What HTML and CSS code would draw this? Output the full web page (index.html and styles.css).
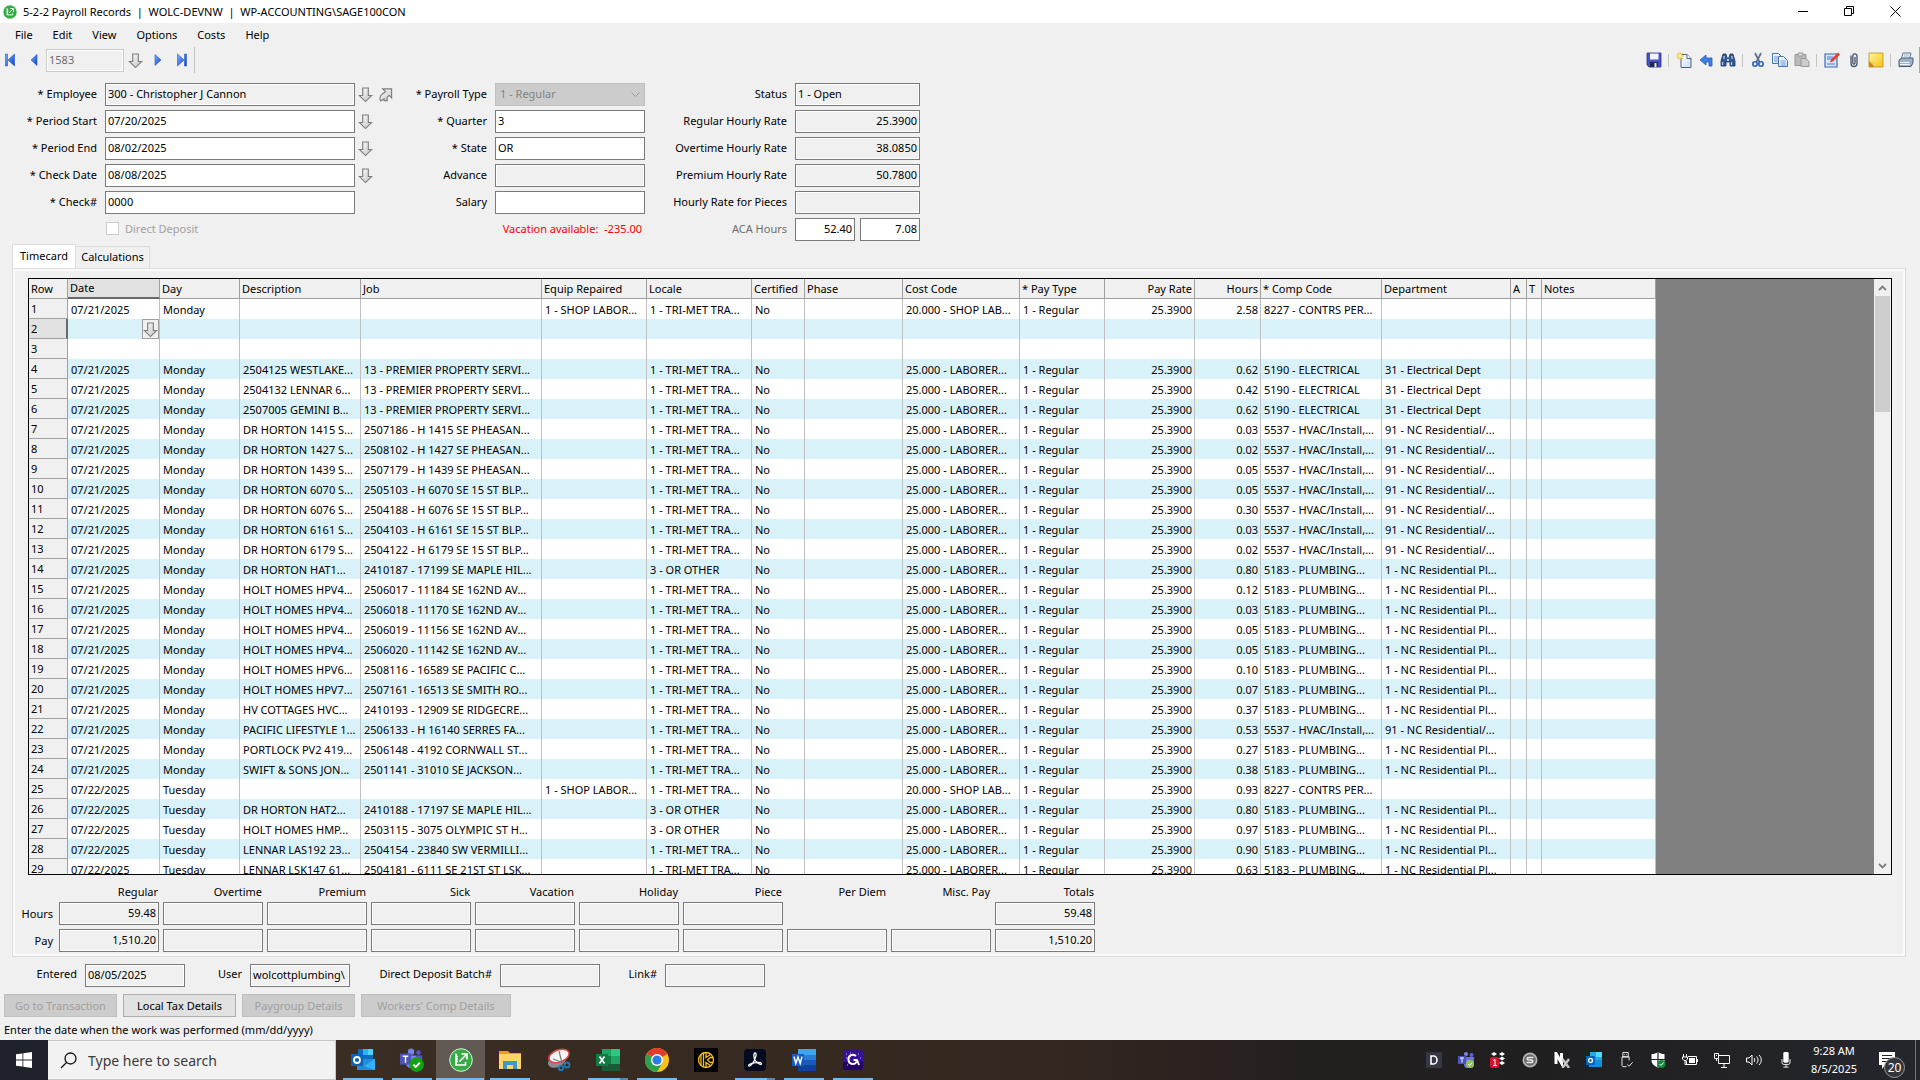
FILE: index.html
```html
<!DOCTYPE html>
<html lang="en">
<head>
<meta charset="utf-8">
<title>5-2-2 Payroll Records</title>
<link rel="stylesheet" href="styles.css">
</head>
<body>
<svg class="defs" aria-hidden="true">
  <defs>
    <linearGradient id="silver" x1="0" y1="0" x2="1" y2="1"><stop offset="0" stop-color="#fdfdfd"/><stop offset="1" stop-color="#c4c4c4"/></linearGradient>
    <linearGradient id="blue" x1="0" y1="0" x2="1" y2="1"><stop offset="0" stop-color="#7fb2ff"/><stop offset="1" stop-color="#0a3fc4"/></linearGradient>
    <linearGradient id="yellow" x1="0" y1="0" x2="1" y2="1"><stop offset="0" stop-color="#fff3a0"/><stop offset="1" stop-color="#f4c414"/></linearGradient>
    <linearGradient id="page" x1="0" y1="0" x2="1" y2="1"><stop offset="0" stop-color="#ffffff"/><stop offset="1" stop-color="#c9daf3"/></linearGradient>
    <symbol id="down" viewBox="0 0 16 17"><path d="M5 1.500h6v8h3.600L8 16 1.400 9.500H5z" fill="url(#silver)" stroke="#7c7c7c" stroke-width="1.200"/></symbol>
    <symbol id="sage" viewBox="0 0 24 24"><circle cx="12" cy="12" r="11.500" fill="#36ab45"/><path d="M7 5.500v11.500h9.500v-3M7 8.500h2M7 11h2M7 13.500h2M10.500 13.500l7-7M12.500 6h5.500v5.500" fill="none" stroke="#fff" stroke-width="1.600"/></symbol>
  </defs>
</svg>

<header class="titlebar">
  <svg class="app-icon" viewBox="0 0 24 24"><use href="#sage"/></svg>
  <h1>5-2-2 Payroll Records&nbsp; |&nbsp; WOLC-DEVNW&nbsp; |&nbsp; WP-ACCOUNTING\SAGE100CON</h1>
  <div class="window-controls">
    <button aria-label="Minimize"><svg viewBox="0 0 11 11"><path d="M0 5.500h10" stroke="#000"/></svg></button>
    <button aria-label="Restore"><svg viewBox="0 0 11 11"><path d="M.5 2.500h7v7h-7zM2.500 2.500v-2h7v7h-2" fill="none" stroke="#000"/></svg></button>
    <button aria-label="Close"><svg viewBox="0 0 11 11"><path d="M.5.500l10 10M10.500.500l-10 10" stroke="#000"/></svg></button>
  </div>
</header>

<nav class="menu">
  <button>File</button><button>Edit</button><button>View</button><button>Options</button><button>Costs</button><button>Help</button>
</nav>

<div class="toolbar">
  <div class="record-nav">
    <button class="first" aria-label="First record"><svg viewBox="0 0 12 14"><path d="M1.500 1h2v12h-2zM10.500 1v12L4 7z" fill="url(#blue)" stroke="#2458c8" stroke-width=".6"/></svg></button>
    <button class="edge" aria-label="Previous record"><svg viewBox="0 0 12 14"><path d="M9 1.500v11L3 7z" fill="url(#blue)" stroke="#2458c8" stroke-width=".6"/></svg></button>
    <input class="record-no" aria-label="Record" value="1583" disabled>
    <button class="pick" aria-label="Find record"><svg viewBox="0 0 16 17"><use href="#down"/></svg></button>
    <button aria-label="Next record"><svg viewBox="0 0 12 14"><path d="M3 1.500v11L9 7z" fill="url(#blue)" stroke="#2458c8" stroke-width=".6"/></svg></button>
    <button class="edge" aria-label="Last record"><svg viewBox="0 0 12 14"><path d="M8.500 1h2v12h-2zM1.500 1v12L8 7z" fill="url(#blue)" stroke="#2458c8" stroke-width=".6"/></svg></button>
  </div>
  <div class="tools">
    <button aria-label="Save"><svg viewBox="0 0 16 16"><path d="M1 1h14v14H3l-2-2z" fill="#4a52c0" stroke="#2c3290" stroke-width=".8"/><path d="M4 1.500h8.500v6H4z" fill="#f2f5ff"/><path d="M4 10h8v5H4z" fill="#23294f"/><path d="M8.500 11h2v4h-2z" fill="#e8ecff"/></svg></button>
    <i></i>
    <button aria-label="New"><svg viewBox="0 0 16 16"><path d="M5 2.500h6l4 4v9H5z" fill="url(#page)" stroke="#49658c"/><path d="M11 2.500v4h4" fill="#fff" stroke="#49658c"/><path d="M4 0v8M0 4h8M1.200 1.200l5.600 5.600M6.800 1.200L1.200 6.800" stroke="#f0c230" stroke-width="1.200"/><circle cx="4" cy="4" r="1.700" fill="#fff6b0"/></svg></button>
    <button aria-label="Undo"><svg viewBox="0 0 16 16"><path d="M2 8l6-5v3h6v8h-3V10H8v3z" fill="#3f7fe0" stroke="#2458ae" stroke-width=".8"/></svg></button>
    <button aria-label="Find"><svg viewBox="0 0 16 16"><path d="M3 2h3l1 4h2l1-4h3l2 7v5h-5v-4H6v4H1V9z" fill="#31578f" stroke="#1d3763" stroke-width=".8"/><path d="M2.500 10v3M11.500 10v3M4 4v3M12 4v3" stroke="#b9d2f5" stroke-width="1.200"/><path d="M7 7h2v2H7z" fill="#b9d2f5"/></svg></button>
    <i></i>
    <button aria-label="Cut"><svg viewBox="0 0 16 16"><path d="M5 1l4.500 9M11 1L6.500 10" stroke="#5e7085" stroke-width="1.700"/><circle cx="5" cy="12" r="2.200" fill="none" stroke="#2862c4" stroke-width="1.600"/><circle cx="11" cy="12" r="2.200" fill="none" stroke="#2862c4" stroke-width="1.600"/></svg></button>
    <button aria-label="Copy"><svg viewBox="0 0 16 16"><path d="M.5 1.500h6l3 3v7h-9z" fill="url(#page)" stroke="#4674b8"/><path d="M6.500 4.500h5l4 4v6h-9z" fill="url(#page)" stroke="#4674b8"/><path d="M2 5h4M2 7h4M2 9h4M8.500 9h5M8.500 11h5M8.500 13h5" stroke="#6f9be0"/></svg></button>
    <button aria-label="Paste"><svg viewBox="0 0 16 16"><path d="M1 2.500h11v11H1z" fill="#b9b9b9" stroke="#999"/><path d="M4 1h5v3H4z" fill="#d8d8d8" stroke="#999"/><path d="M7 6.500h5l3 3v5H7z" fill="#ccc" stroke="#999"/></svg></button>
    <i></i>
    <button aria-label="Edit"><svg viewBox="0 0 16 16"><path d="M1 2h12v13H1z" fill="#d6e4fa" stroke="#3c6ab4" stroke-width="1.200"/><path d="M3 5h6M3 7h5M3 12h8" stroke="#4a7ed0"/><path d="M6 10.500l1-3 7-7 2 2-7 7z" fill="#e8402a"/></svg></button>
    <button aria-label="Attachments"><svg viewBox="0 0 16 16"><path d="M5 3.500v8a3 3 0 0 0 6 0V4a2 2 0 0 0-4.200 0v7a1 1 0 0 0 2.200 0V5" fill="none" stroke="#465468" stroke-width="1.300"/></svg></button>
    <button aria-label="Note"><svg viewBox="0 0 16 16"><path d="M1 1h14v14H1z" fill="url(#yellow)" stroke="#c09018" stroke-width=".8"/><path d="M1 9l6 6H1z" fill="#c48a0a"/><path d="M2 9.500l5 1v4.500" fill="#f7d24a"/></svg></button>
    <i></i>
    <button aria-label="Print"><svg viewBox="0 0 16 16"><path d="M5 1h8l-2 7H3z" fill="#fff" stroke="#59718f"/><path d="M1 8l3-2h11v5l-2 3.500H1z" fill="#9fb1c8" stroke="#475d7c"/><path d="M2 10.500h9.500M2 12.500h9.500" stroke="#f4f8ff"/><path d="M6 3h5M5.500 5h5" stroke="#8da4c0"/></svg></button>
  </div>
</div>

<form class="fields">
  <div class="group group-main">
    <label for="employee">* Employee</label><input id="employee" value="300 - Christopher J Cannon" readonly class="locked">
    <span class="picks"><button type="button" aria-label="Find employee"><svg viewBox="0 0 16 17"><use href="#down"/></svg></button><button type="button" aria-label="Open employee"><svg viewBox="0 0 16 17"><path d="M5 2.500h9.500V12L12 9.500c-3 1.500-3 3-2 5.500H6.500v-2L3 15.500C.500 12 3 8 8 5.500z" fill="url(#silver)" stroke="#7c7c7c" stroke-width="1.200"/></svg></button></span>
    <label for="pstart">* Period Start</label><input id="pstart" value="07/20/2025">
    <span class="picks"><button type="button" aria-label="Pick period start"><svg viewBox="0 0 16 17"><use href="#down"/></svg></button></span>
    <label for="pend">* Period End</label><input id="pend" value="08/02/2025">
    <span class="picks"><button type="button" aria-label="Pick period end"><svg viewBox="0 0 16 17"><use href="#down"/></svg></button></span>
    <label for="cdate">* Check Date</label><input id="cdate" value="08/08/2025">
    <span class="picks"><button type="button" aria-label="Pick check date"><svg viewBox="0 0 16 17"><use href="#down"/></svg></button></span>
    <label for="checkno">* Check#</label><input id="checkno" value="0000"><span></span>
    <span></span><label class="tick"><input type="checkbox" disabled>Direct Deposit</label>
  </div>
  <div class="group group-pay">
    <label for="ptype">* Payroll Type</label><span class="combo"><select id="ptype" disabled><option>1 - Regular</option></select><svg viewBox="0 0 9 6"><path d="M.5.500l4 4 4-4" fill="none" stroke="#9a9a9a"/></svg></span>
    <label for="quarter">* Quarter</label><input id="quarter" value="3">
    <label for="state">* State</label><input id="state" value="OR">
    <label for="advance">Advance</label><input id="advance" class="locked" readonly>
    <label for="salary">Salary</label><input id="salary">
    <p class="warning">Vacation available:&nbsp; -235.00</p>
  </div>
  <div class="group group-rates">
    <label for="status">Status</label><input id="status" class="locked" value="1 - Open" readonly>
    <label for="rrate">Regular Hourly Rate</label><input id="rrate" class="locked num" value="25.3900" readonly>
    <label for="orate">Overtime Hourly Rate</label><input id="orate" class="locked num" value="38.0850" readonly>
    <label for="prate">Premium Hourly Rate</label><input id="prate" class="locked num" value="50.7800" readonly>
    <label for="piece">Hourly Rate for Pieces</label><input id="piece" class="locked num" readonly>
    <label for="aca" class="dim">ACA Hours</label><span class="pair"><input id="aca" class="num" value="52.40"><input aria-label="ACA Hours average" class="num" value="7.08"></span>
  </div>
</form>

<div class="tabs" role="tablist">
  <button role="tab" aria-selected="true" class="active">Timecard</button><button role="tab" aria-selected="false">Calculations</button>
</div>

<main class="panel">
  <div class="grid-frame">
    <table class="timecard">
      <colgroup>
        <col class="c-row"><col class="c-date"><col class="c-day"><col class="c-desc"><col class="c-job"><col class="c-equip"><col class="c-locale"><col class="c-cert"><col class="c-phase"><col class="c-cost"><col class="c-type"><col class="c-rate"><col class="c-hours"><col class="c-comp"><col class="c-dept"><col class="c-a"><col class="c-t"><col class="c-notes">
      </colgroup>
      <thead>
        <tr><th>Row</th><th class="current">Date</th><th>Day</th><th>Description</th><th>Job</th><th>Equip Repaired</th><th>Locale</th><th>Certified</th><th>Phase</th><th>Cost Code</th><th>* Pay Type</th><th class="num">Pay Rate</th><th class="num">Hours</th><th>* Comp Code</th><th>Department</th><th>A</th><th>T</th><th>Notes</th></tr>
      </thead>
      <tbody id="rows"></tbody>
    </table>
    <div class="scrollbar">
      <button aria-label="Scroll up"><svg viewBox="0 0 9 6"><path d="M1 5l3.500-3.500L8 5" fill="none" stroke="#808080" stroke-width="1.800"/></svg></button>
      <div class="track"><div class="thumb"></div></div>
      <button aria-label="Scroll down"><svg viewBox="0 0 9 6"><path d="M1 1l3.500 3.500L8 1" fill="none" stroke="#808080" stroke-width="1.800"/></svg></button>
    </div>
  </div>

  <table class="totals">
    <thead>
      <tr><td></td><th>Regular</th><th>Overtime</th><th>Premium</th><th>Sick</th><th>Vacation</th><th>Holiday</th><th>Piece</th><th>Per Diem</th><th>Misc. Pay</th><th>Totals</th></tr>
    </thead>
    <tbody>
      <tr><th>Hours</th><td><output>59.48</output></td><td><output></output></td><td><output></output></td><td><output></output></td><td><output></output></td><td><output></output></td><td><output></output></td><td></td><td></td><td><output>59.48</output></td></tr>
      <tr><th>Pay</th><td><output>1,510.20</output></td><td><output></output></td><td><output></output></td><td><output></output></td><td><output></output></td><td><output></output></td><td><output></output></td><td><output></output></td><td><output></output></td><td><output>1,510.20</output></td></tr>
    </tbody>
  </table>
</main>

<div class="meta">
  <label for="entered">Entered</label><input id="entered" class="locked" value="08/05/2025" readonly>
  <label for="user">User</label><input id="user" class="locked" value="wolcottplumbing\" readonly>
  <label for="batch">Direct Deposit Batch#</label><input id="batch" class="locked" readonly>
  <label for="link">Link#</label><input id="link" class="locked" readonly>
</div>
<div class="actions">
  <button disabled>Go to Transaction</button><button>Local Tax Details</button><button disabled>Paygroup Details</button><button class="wide" disabled>Workers' Comp Details</button>
</div>
<p class="hint">Enter the date when the work was performed (mm/dd/yyyy)</p>

<footer class="taskbar">
  <button class="start" aria-label="Start"><svg viewBox="0 0 16 16"><path d="M0 2.300L6.500 1.400v6.200H0zM7.300 1.300L16 0v7.600H7.300zM0 8.400h6.500v6.200L0 13.700zM7.300 8.400H16V16l-8.700-1.300z" fill="#fff"/></svg></button>
  <label class="search"><svg viewBox="0 0 17 17"><circle cx="10.500" cy="6.500" r="5.500" fill="none" stroke="#111" stroke-width="1.300"/><path d="M6.500 10.500L1 16" stroke="#111" stroke-width="1.300"/></svg><input type="text" aria-label="Search" placeholder="Type here to search"></label>
  <div class="apps">
    <button class="open" aria-label="Outlook"><svg viewBox="0 0 24 24"><path d="M7 1h15v12H7z" fill="#0f6cbd"/><path d="M12 1h10v6H12z" fill="#35b1f1"/><path d="M17 1h5v6h-5z" fill="#50d0fa"/><path d="M6 11l18 0v11H6z" fill="#1e8fe0"/><path d="M24 11L13 18l11 4z" fill="#36b0f4"/><path d="M0 6h12v12H0z" fill="#0a63b8"/><circle cx="6" cy="12" r="3" fill="none" stroke="#fff" stroke-width="1.800"/></svg></button>
    <button class="open" aria-label="Teams"><svg viewBox="0 0 26 26"><circle cx="12" cy="4" r="3.500" fill="#7b83eb"/><circle cx="20" cy="5" r="2.500" fill="#5059c9"/><path d="M7 8h11v8a6 6 0 0 1-11 3z" fill="#7b83eb"/><path d="M18 8h6v8h-6z" fill="#5059c9"/><path d="M0 6h12v12H0z" fill="#4b53bc"/><path d="M3 9h6M6 9v7" stroke="#fff" stroke-width="1.600"/><circle cx="18" cy="18" r="8" fill="#13a10e"/><path d="M14.500 18l2.500 2.500 4.500-4.500" fill="none" stroke="#fff" stroke-width="2"/></svg></button>
    <button class="open selected" aria-label="Sage 100 Contractor"><svg viewBox="0 0 24 24"><use href="#sage"/><circle cx="12" cy="12" r="11.300" fill="none" stroke="#eef8ee" stroke-width=".9"/></svg></button>
    <button class="open" aria-label="File Explorer"><svg viewBox="0 0 24 24"><path d="M1 3h9l2 2h11v16H1z" fill="#e8a010"/><path d="M1 6h22v15H1z" fill="#ffd768"/><path d="M5 21v-8h14v8h-4v-4H9v4z" fill="#3e95d8"/></svg></button>
    <button aria-label="Snipping Tool"><svg viewBox="0 0 24 24"><ellipse cx="10" cy="13" rx="9.500" ry="6" fill="#8c8c90" transform="rotate(-25 10 13)"/><ellipse cx="12" cy="8" rx="10.500" ry="6" fill="#f6f6f6" stroke="#d84848" stroke-width="1.600" transform="rotate(-20 12 8)"/><path d="M12 3l3 12M6 11l11 4" stroke="#777" stroke-width="1.200"/><circle cx="14" cy="20" r="2.200" fill="none" stroke="#1e7ab8" stroke-width="1.800"/><circle cx="20" cy="17" r="2.500" fill="none" stroke="#1e7ab8" stroke-width="1.800"/></svg></button>
    <button class="open stacked" aria-label="Excel"><svg viewBox="0 0 24 24"><path d="M6 1h18v22H6z" fill="#21a366"/><path d="M15 1h9v7h-9z" fill="#33c481"/><path d="M6 8h9v8H6z" fill="#107c41"/><path d="M6 16h18v7H6z" fill="#185c37"/><path d="M0 6h12v12H0z" fill="#107c41"/><path d="M3.500 8.500l5 7M8.500 8.500l-5 7" stroke="#fff" stroke-width="1.700"/></svg></button>
    <button class="open" aria-label="Chrome"><svg viewBox="0 0 24 24"><circle cx="12" cy="12" r="12" fill="#fbc116"/><path d="M12 12L1.600 6A12 12 0 0 1 22.400 6z" fill="#e33b2e"/><path d="M1.600 6A12 12 0 0 0 12 24l5.200-9z" fill="#2da14c"/><circle cx="12" cy="12" r="6" fill="#fff"/><circle cx="12" cy="12" r="4.600" fill="#2b7de9"/></svg></button>
    <button aria-label="Keeper"><svg viewBox="0 0 24 24"><path d="M0 0h24v24H0z" fill="#000"/><circle cx="12" cy="12" r="7.500" fill="none" stroke="#f5bd1a" stroke-width="1.300"/><path d="M7 6.500v11M9.500 5v14M12 4.500v5l5-3.500M12 19.500v-5l5 3.500M19 9.500h-2.500L13.500 12l3 2.500H19" fill="none" stroke="#f5bd1a" stroke-width="1.300"/></svg></button>
    <button class="open stacked" aria-label="Acrobat"><svg viewBox="0 0 24 24"><rect x="1" y="1" width="22" height="22" rx="4" fill="#020b1f"/><path d="M12 5c2 0 1 4-1 8-2 4-5 6-5.500 4.500C5 15.500 17 13 18.500 15.500 19 17.500 14 16 12 12c-1.500-3-1.500-7 0-7z" fill="none" stroke="#fff" stroke-width="1.300"/></svg></button>
    <button class="open" aria-label="Word"><svg viewBox="0 0 24 24"><path d="M6 1h18v22H6z" fill="#2b7cd3"/><path d="M6 1h18v6H6z" fill="#41a5ee"/><path d="M6 12h18v6H6z" fill="#185abd"/><path d="M6 17h18v6H6z" fill="#1041a0"/><path d="M0 6h12v12H0z" fill="#185abd"/><path d="M2 8.500l1.800 7L6 9l2.200 6.500 1.800-7" fill="none" stroke="#fff" stroke-width="1.400"/></svg></button>
    <button class="open" aria-label="G app"><svg viewBox="0 0 24 24"><rect x="2" y="2" width="20" height="20" rx="3" fill="#35109a"/><path d="M2 14h20v5a3 3 0 0 1-3 3H5a3 3 0 0 1-3-3z" fill="#230465"/><path d="M15 8c-4-3-8 0-7.500 4 .5 5 6 5 8 2v-2h-3M16 12l2 5" fill="none" stroke="#fff" stroke-width="2"/><path d="M5 6h1M9 5h1M17 6h1M6 17h1M19 10h1M5 10h1" stroke="#c9b5ff"/></svg></button>
  </div>
  <div class="tray">
    <button aria-label="D"><svg viewBox="0 0 16 16"><path d="M0 0h16v16H0z" fill="#333844"/><path d="M5 4h2.500a3.500 4 0 0 1 0 8H5z" fill="none" stroke="#fff" stroke-width="1.600"/></svg></button>
    <button aria-label="Teams status"><svg viewBox="0 0 16 16"><circle cx="8" cy="2" r="2" fill="#7b83eb"/><circle cx="13.500" cy="3" r="2" fill="#5b65d8"/><path d="M6 5h10v6a5 5 0 0 1-10 2z" fill="#6b74e0"/><path d="M0 4h8v8H0z" fill="#4b53bc"/><path d="M2 6h4M4 6v4.500" stroke="#fff"/><circle cx="12" cy="12" r="4" fill="#92c353"/><path d="M10 12l1.500 1.500 2.500-3" fill="none" stroke="#fff"/></svg></button>
    <button aria-label="Dropbox"><svg viewBox="0 0 16 16"><path d="M4 0l3 2-3 2-3-2zM12 0l3 2-3 2-3-2zM12 4.500l3 2-3 2-3-2zM12 9l3 2-3 2-3-2z" fill="#fff"/><rect y="5" width="9" height="11" rx="2" fill="#d8122e"/><path d="M3 8.500l2-1v6M3 13.500h4" fill="none" stroke="#fff"/></svg></button>
    <button aria-label="Snagit"><svg viewBox="0 0 16 16"><circle cx="8" cy="8" r="7.500" fill="#b4b4b4"/><circle cx="8" cy="8" r="5.800" fill="#6a6a6a"/><path d="M11.500 5.500H6.500a1.200 1.200 0 0 0 0 2.500h3a1.200 1.200 0 0 1 0 2.500H4.500" fill="none" stroke="#e8e8e8" stroke-width="1.600"/></svg></button>
    <button aria-label="NX"><svg viewBox="0 0 16 16"><path d="M2 12V1.500L7.500 11V1" fill="none" stroke="#fff" stroke-width="3"/><path d="M8.500 7l6.500 9M15 7l-6.500 9" stroke="#c4c4c4" stroke-width="2.400"/></svg></button>
    <button aria-label="Outlook status"><svg viewBox="0 0 16 16"><path d="M4 0h12v9H4z" fill="#28a8ea"/><path d="M10 0h6v5h-6z" fill="#50d9ff"/><path d="M3 8h13v7H3z" fill="#1490df"/><path d="M0 4h9v9H0z" fill="#0364b8"/><circle cx="4.500" cy="8.500" r="2" fill="none" stroke="#fff" stroke-width="1.300"/></svg></button>
    <button aria-label="USB"><svg viewBox="0 0 16 18"><path d="M4.500.500h6v5h-6zM3.500 5.500h8v4M3.500 5.500v10l1 1h4M6 3h1M8 3h1M9.500 14l2 2 4-4.500" fill="none" stroke="#fff"/></svg></button>
    <button aria-label="Security"><svg viewBox="0 0 16 16"><path d="M8 0c2 1.500 4 2 6.500 2v6c0 4-3 6-6.500 7.500C4.500 14 1.500 12 1.500 8V2C4 2 6 1.500 8 0z" fill="#fff"/><path d="M8 0v15M1 7.500h14" stroke="#222" stroke-width="1.200"/><circle cx="11.500" cy="12" r="4" fill="#108a3e"/><path d="M9.500 12l1.500 1.500 2.500-3" fill="none" stroke="#fff"/></svg></button>
    <button aria-label="Battery"><svg viewBox="0 0 16 16"><path d="M6 4.500h8.500v8H4.500V9M1.500 2v3M4.500 2v3M.5 5h5v2L4 8.500H2L.5 7zM3 9v3.500h2" fill="none" stroke="#fff"/><path d="M7 6h6v5H7z" fill="#fff"/><path d="M15 7h1v3h-1z" fill="#fff"/></svg></button>
    <button aria-label="Network"><svg viewBox="0 0 16 16"><path d="M5 3.500h10.500v8H4.500V7M7 15.500h6M10 12v3M.5 1.500h4v5h-4zM2 3.500h1M2.500 6.500V9" fill="none" stroke="#fff"/></svg></button>
    <button aria-label="Volume"><svg viewBox="0 0 16 16"><path d="M.5 6v4h2.500l3 3V3L3 6zM8 6c1 1 1 3 0 4M10.500 4.500c2 2 2 5 0 7M13 3c3 3 3 7 0 10" fill="none" stroke="#fff"/></svg></button>
    <button aria-label="Microphone"><svg viewBox="0 0 16 18"><rect x="5" y="0" width="6" height="12" rx="1.500" fill="#fff"/><path d="M3.500 8v4a2 2 0 0 0 2 2h5a2 2 0 0 0 2-2V8M8 14v3M5 17h6" fill="none" stroke="#fff"/></svg></button>
  </div>
  <time class="clock">9:28 AM<br>8/5/2025</time>
  <button class="notices" aria-label="Notifications"><svg viewBox="0 0 17 17"><path d="M0 0h16v13H6l-3 4v-4H0z" fill="#fff"/><path d="M3 3.500h10M3 6.500h10M3 9.500h10" stroke="#222"/></svg><span class="badge">20</span></button>
</footer>
<script src="grid.js"></script>
</body>
</html>
```

FILE: grid.js
```js
// Timecard lines: date, day, description, job, equipment, locale, cost code, hours, comp code, department
const MON = ['07/21/2025', 'Monday'];
const TUE = ['07/22/2025', 'Tuesday'];
const TRI = '1 - TRI-MET TRA...';
const OTH = '3 - OR OTHER';
const LAB = '25.000 - LABORER...';
const SHOP = '20.000 - SHOP LAB...';
const ELEC = ['5190 - ELECTRICAL', '31 - Electrical Dept'];
const HVAC = ['5537 - HVAC/Install,...', '91 - NC Residential/...'];
const PLMB = ['5183 - PLUMBING...', '1 - NC Residential Pl...'];
const CONT = ['8227 - CONTRS PER...', ''];

const lines = [
  [...MON, '', '', '1 - SHOP LABOR...', TRI, SHOP, '2.58', ...CONT],
  null,
  null,
  [...MON, '2504125 WESTLAKE...', '13 - PREMIER PROPERTY SERVI...', '', TRI, LAB, '0.62', ...ELEC],
  [...MON, '2504132 LENNAR 6...', '13 - PREMIER PROPERTY SERVI...', '', TRI, LAB, '0.42', ...ELEC],
  [...MON, '2507005 GEMINI B...', '13 - PREMIER PROPERTY SERVI...', '', TRI, LAB, '0.62', ...ELEC],
  [...MON, 'DR HORTON 1415 S...', '2507186 - H 1415 SE PHEASAN...', '', TRI, LAB, '0.03', ...HVAC],
  [...MON, 'DR HORTON 1427 S...', '2508102 - H 1427 SE PHEASAN...', '', TRI, LAB, '0.02', ...HVAC],
  [...MON, 'DR HORTON 1439 S...', '2507179 - H 1439 SE PHEASAN...', '', TRI, LAB, '0.05', ...HVAC],
  [...MON, 'DR HORTON 6070 S...', '2505103 - H 6070 SE 15 ST BLP...', '', TRI, LAB, '0.05', ...HVAC],
  [...MON, 'DR HORTON 6076 S...', '2504188 - H 6076 SE 15 ST BLP...', '', TRI, LAB, '0.30', ...HVAC],
  [...MON, 'DR HORTON 6161 S...', '2504103 - H 6161 SE 15 ST BLP...', '', TRI, LAB, '0.03', ...HVAC],
  [...MON, 'DR HORTON 6179 S...', '2504122 - H 6179 SE 15 ST BLP...', '', TRI, LAB, '0.02', ...HVAC],
  [...MON, 'DR HORTON HAT1...', '2410187 - 17199 SE MAPLE HIL...', '', OTH, LAB, '0.80', ...PLMB],
  [...MON, 'HOLT HOMES HPV4...', '2506017 - 11184 SE 162ND AV...', '', TRI, LAB, '0.12', ...PLMB],
  [...MON, 'HOLT HOMES HPV4...', '2506018 - 11170 SE 162ND AV...', '', TRI, LAB, '0.03', ...PLMB],
  [...MON, 'HOLT HOMES HPV4...', '2506019 - 11156 SE 162ND AV...', '', TRI, LAB, '0.05', ...PLMB],
  [...MON, 'HOLT HOMES HPV4...', '2506020 - 11142 SE 162ND AV...', '', TRI, LAB, '0.05', ...PLMB],
  [...MON, 'HOLT HOMES HPV6...', '2508116 - 16589 SE PACIFIC C...', '', TRI, LAB, '0.10', ...PLMB],
  [...MON, 'HOLT HOMES HPV7...', '2507161 - 16513 SE SMITH RO...', '', TRI, LAB, '0.07', ...PLMB],
  [...MON, 'HV COTTAGES HVC...', '2410193 - 12909 SE RIDGECRE...', '', TRI, LAB, '0.37', ...PLMB],
  [...MON, 'PACIFIC LIFESTYLE 1...', '2506133 - H 16140 SERRES FA...', '', TRI, LAB, '0.53', ...HVAC],
  [...MON, 'PORTLOCK PV2 419...', '2506148 - 4192 CORNWALL ST...', '', TRI, LAB, '0.27', ...PLMB],
  [...MON, 'SWIFT & SONS JON...', '2501141 - 31010 SE JACKSON...', '', TRI, LAB, '0.38', ...PLMB],
  [...TUE, '', '', '1 - SHOP LABOR...', TRI, SHOP, '0.93', ...CONT],
  [...TUE, 'DR HORTON HAT2...', '2410188 - 17197 SE MAPLE HIL...', '', OTH, LAB, '0.80', ...PLMB],
  [...TUE, 'HOLT HOMES HMP...', '2503115 - 3075 OLYMPIC ST H...', '', OTH, LAB, '0.97', ...PLMB],
  [...TUE, 'LENNAR LAS192 23...', '2504154 - 23840 SW VERMILLI...', '', TRI, LAB, '0.90', ...PLMB],
  [...TUE, 'LENNAR LSK147 61...', '2504181 - 6111 SE 21ST ST LSK...', '', TRI, LAB, '0.63', ...PLMB],
];

const CURRENT_ROW = 2;
const body = document.getElementById('rows');

lines.forEach((line, i) => {
  const number = i + 1;
  const tr = body.insertRow();
  const head = document.createElement('th');
  head.textContent = number;
  tr.append(head);

  let cells = Array(17).fill('');
  if (line) {
    const [date, day, desc, job, equip, locale, cost, hours, comp, dept] = line;
    cells = [date, day, desc, job, equip, locale, 'No', '', cost, '1 - Regular', '25.3900', hours, comp, dept, '', '', ''];
  }
  cells.forEach((text, c) => {
    const td = tr.insertCell();
    td.textContent = text;
    if (c === 10 || c === 11) td.className = 'num';
  });

  if (number === CURRENT_ROW) {
    head.className = 'current';
    tr.cells[1].className = 'editing';
    tr.cells[1].innerHTML = '<button aria-label="Pick date"><svg viewBox="0 0 16 17"><use href="#down"/></svg></button>';
  }
});
```

FILE: styles.css
```css
* { box-sizing: border-box; }

body {
  margin: 0;
  height: 100vh;
  display: flex;
  flex-direction: column;
  overflow: hidden;
  background: #f0f0f0;
  color: #000;
  font: 11px/16px "Noto Sans", "Open Sans", sans-serif;
}

button, input, select { font: inherit; color: inherit; }
button { border: 0; padding: 0; background: none; }
svg { display: block; }
p, h1 { margin: 0; }
.defs { position: absolute; width: 0; height: 0; }

/* Title bar */
.titlebar { display: flex; align-items: center; height: 23px; padding: 0 2px 0 3px; background: #fff; }
.app-icon { width: 14px; height: 14px; }
.titlebar h1 { flex: 1; margin-left: 6px; font-size: 11px; font-weight: 400; }
.window-controls { display: flex; }
.window-controls button { width: 46px; height: 23px; display: grid; place-items: center; }
.window-controls svg { width: 11px; height: 11px; }

.menu { display: flex; gap: 20px; height: 24px; align-items: center; padding-left: 15px; }

/* Toolbar */
.toolbar { display: flex; justify-content: space-between; height: 26px; }
.record-nav, .tools { display: flex; align-items: center; }
.record-nav { padding-left: 4px; border-right: 1px solid #c0c0c0; }
.record-nav button { flex: none; width: 24px; display: grid; justify-items: start; }
.record-nav button svg { width: 12px; height: 14px; }
.record-nav .pick svg { width: 15px; height: 17px; }
.record-nav .edge { width: 18px; }
.record-nav .pick { margin-left: 4px; }
.record-no { width: 78px; height: 23px; }
.tools { padding-right: 5px; gap: 6px; border-right: 1px solid #a8a8a8; }
.tools svg { width: 16px; height: 16px; }
.tools i { width: 1px; height: 13px; margin-right: 1px; background: #c4c4c4; }

/* Entry fields */
input, output {
  display: block;
  width: 100%;
  height: 23px;
  min-width: 0;
  padding: 0 2px 2px;
  border: 1px solid #7a7a7a;
  border-radius: 0;
  background: #fff;
}
input:focus { outline: none; }
.locked, output, .record-no { background: #f0f0f0; box-shadow: inset 0 0 0 1px #fff; }
.record-no { border-color: #ccc; color: #6d6d6d; }
.num { text-align: right; }

.fields { display: flex; padding-top: 10px; }
.group { display: grid; grid-auto-rows: 23px; row-gap: 4px; }
.group-main { grid-template-columns: 105px 250px 45px; }
.group-pay { grid-template-columns: 95px 150px; }
.group-rates { grid-template-columns: 150px 125px; }
.group > label { padding: 3px 8px 0 0; text-align: right; }
.group > .dim { color: #6d6d6d; }
.picks { display: flex; gap: 5px; padding: 3px; }
.picks svg, .editing svg { width: 15px; height: 17px; }
.group > .tick { display: flex; align-items: center; gap: 6px; padding: 0 1px 2px; color: #a0a0a0; }
.tick input { appearance: none; width: 13px; height: 13px; padding: 0; border-color: #ccc; margin: 0; }
.combo { display: grid; align-items: center; }
.combo > * { grid-area: 1 / 1; }
.combo select {
  appearance: none;
  height: 23px;
  padding: 0 4px 2px;
  border: 1px solid #bfbfbf;
  border-radius: 0;
  background: #ccc;
  color: #838383;
  opacity: 1;
}
.combo svg { width: 9px; height: 6px; justify-self: end; margin-right: 5px; }
.warning { grid-column: 2; padding: 3px 3px 0 0; color: #f00; text-align: right; }
.pair { display: flex; gap: 5px; }

/* Tabs */
.tabs { display: flex; align-items: flex-end; height: 27px; padding: 0 0 0 12px; }
.tabs button { height: 22px; width: 74px; border: 1px solid #dcdcdc; border-width: 1px 1px 0 0; padding-bottom: 2px; }
.tabs .active { height: 24px; width: 64px; background: #fff; border-left-width: 1px; }

.panel {
  flex: 1;
  min-height: 0;
  display: flex;
  flex-direction: column;
  margin: 0 14px 0 12px;
  padding: 9px 13px 0 15px;
  border: 1px solid #dcdcdc;
  box-shadow: inset 0 0 0 2px #fafafa;
}

/* Timecard grid */
.grid-frame {
  flex: 1;
  min-height: 0;
  display: flex;
  justify-content: space-between;
  align-items: flex-start;
  overflow: hidden;
  border: 1px solid #000;
  background: #808080;
}
.timecard { flex: none; width: 1627px; table-layout: fixed; border-collapse: separate; border-spacing: 0; }
.c-row { width: 39px; } .c-date { width: 92px; } .c-day { width: 80px; }
.c-desc { width: 121px; } .c-job { width: 181px; } .c-equip, .c-locale { width: 105px; }
.c-cert { width: 53px; } .c-phase { width: 98px; } .c-cost { width: 117px; }
.c-type { width: 85px; } .c-rate { width: 90px; } .c-hours { width: 66px; }
.c-comp { width: 121px; } .c-dept { width: 129px; } .c-a { width: 16px; }
.c-t { width: 15px; } .c-notes { width: 114px; }
.timecard th, .timecard td {
  height: 20px;
  padding: 2px 2px 0 3px;
  border-right: 1px solid #c0c0c0;
  overflow: hidden;
  white-space: nowrap;
  text-align: left;
  font-weight: 400;
}
.timecard td { background: #fff; }
.timecard tr:nth-child(even) td { background: #d9f2f9; }
.timecard th { padding: 0 2px; background: #f0f0f0; border-right-color: #a0a0a0; border-bottom: 1px solid #a0a0a0; }
.timecard .num { text-align: right; }
.timecard thead .current { background: #e1e1e1; border-bottom: 2px solid #696969; }
.timecard tbody .current { background: #e1e1e1; border-right: 2px solid #696969; }
.timecard td.editing { padding: 0; }
.editing button { display: grid; place-items: center; width: 17px; height: 20px; margin-left: auto; border: 1px solid #a0a0a0; background: #f0f0f0; }

.scrollbar { align-self: stretch; width: 17px; display: flex; flex-direction: column; background: #f0f0f0; }
.scrollbar button { height: 17px; display: grid; place-items: center; }
.scrollbar svg { width: 9px; height: 6px; }
.track { flex: 1; padding: 0 1px; }
.thumb { height: 116px; background: #cdcdcd; }

/* Totals: the row labels hang left of the grid's edge */
.totals { flex: none; width: 1075px; margin: 6px 0 0 -8px; border-spacing: 0; table-layout: fixed; align-self: flex-start; }
.totals th, .totals td { padding: 0 0 4px 4px; height: 27px; font-weight: 400; text-align: right; }
.totals thead th, .totals thead td { height: 21px; padding: 0 1px 0 0; }
.totals tr > :first-child { width: 35px; padding: 0 2px 4px 0; }
.totals output { padding: 2px 2px 0; }

/* Record details and actions */
.meta { display: flex; padding: 7px 0; }
.meta label { width: 65px; padding: 2px 8px 0 0; text-align: right; white-space: nowrap; }
.meta label:first-child { width: 85px; }
.meta label[for="batch"] { width: 150px; }
.meta input { width: 100px; }
.actions { display: flex; gap: 6px; padding-left: 4px; }
.actions button { width: 113px; height: 23px; border: 1px solid #adadad; background: #e1e1e1; }
.actions .wide { width: 150px; }
.actions button:disabled { border-color: #bfbfbf; background: #ccc; color: #a0a0a0; }
.hint { height: 23px; padding: 5px 4px 0; }

/* Taskbar */
.taskbar { display: flex; height: 40px; background: linear-gradient(90deg, #20222a 0 48px, #3a2d24 336px, #33271f 55%, #241f1f 68%, #201f20 80%, #24262d); color: #fff; }
.start { width: 48px; display: grid; place-items: center; }
.start svg { width: 16px; height: 16px; }
.search { width: 288px; display: flex; align-items: center; gap: 11px; padding-left: 12px; background: #f2f2f2; border: 1px solid #c8c8c8; border-left: 0; }
.search svg { width: 17px; height: 17px; }
.search input { flex: 1; border: 0; background: none; font-size: 14px; padding: 0; }
.search input::placeholder { color: #3a3a3a; }
.apps { display: flex; margin-left: 2px; flex: 1; }
.apps button { width: 49px; display: grid; place-items: center; border-bottom: 2px solid transparent; padding-top: 2px; }
.apps svg { width: 24px; height: 24px; }
.apps .open { background: linear-gradient(#76b9ed, #76b9ed) 50% 100% / 40px 2px no-repeat border-box; }
.apps .stacked { background: linear-gradient(90deg, #76b9ed 32px, #5a87ab 32px) 50% 100% / 40px 2px no-repeat border-box; }
.apps .selected { background: linear-gradient(#76b9ed, #76b9ed) 0 100% / 48px 2px no-repeat border-box, #625a52; }
.tray { display: flex; align-items: center; }
.tray button { width: 32px; display: grid; place-items: center; }
.tray svg { width: 16px; height: 16px; }
.clock { width: 64px; line-height: 18px; text-align: center; padding-top: 2px; }
.notices { position: relative; width: 50px; border-right: 1px solid #777; margin-right: 4px; display: grid; align-items: center; padding-left: 13px; }
.notices svg { width: 17px; height: 17px; }
.badge { position: absolute; left: 18px; top: 17px; width: 21px; height: 21px; border: 1px solid #999; border-radius: 50%; background: #33353b; font-size: 12px; line-height: 19px; text-align: center; }
```
